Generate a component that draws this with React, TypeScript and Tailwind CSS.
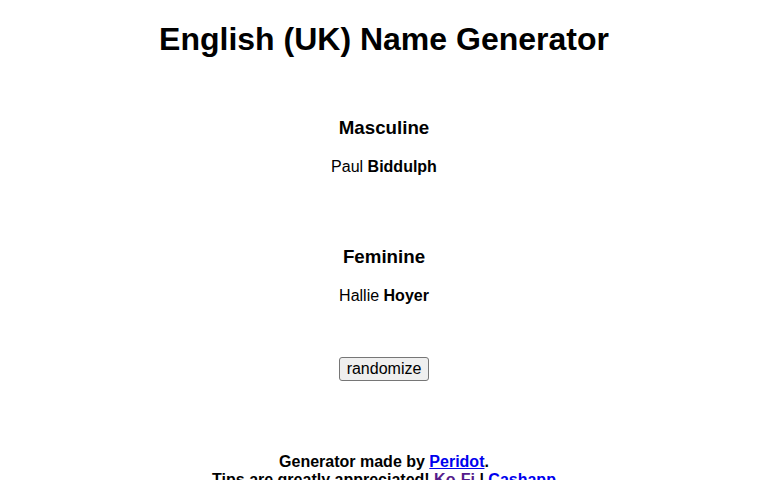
import React from "react";

export default function App() {
  return (
    <div className="bg-white text-black text-center text-[16px] leading-[normal] min-h-[480px]" style={{ fontFamily: '"Liberation Sans", Arial, sans-serif' }}>
      <div className="h-[21.44px]" />
      <h1 className="text-[32px] font-bold leading-[normal]">English (UK) Name Generator</h1>
      <h3 className="mt-[59px] text-[18.72px] font-bold leading-[normal]">Masculine</h3>
      <div className="mt-[18.4px]">
        Paul <b>Biddulph</b>
      </div>
      <h3 className="mt-[70.3px] text-[18.72px] font-bold leading-[normal]">Feminine</h3>
      <div className="mt-[18.72px]">
        Hallie <b>Hoyer</b>
      </div>
      <div className="mt-[52.6px]">
        <button className="bg-[#efefef] border border-[#767676] rounded-[3px] px-[7px] py-[2px] text-[16px] leading-[normal] text-black">
          randomize
        </button>
      </div>
      <div className="mt-[72px] font-bold">
        <div>
          Generator made by <a className="text-[#0000ee] underline" href="#">Peridot</a>.
        </div>
        <div>
          Tips are greatly appreciated! <a className="text-[#551a8b] underline" href="#">Ko-Fi</a> | <a className="text-[#0000ee] underline" href="#">Cashapp</a>
        </div>
      </div>
    </div>
  );
}
